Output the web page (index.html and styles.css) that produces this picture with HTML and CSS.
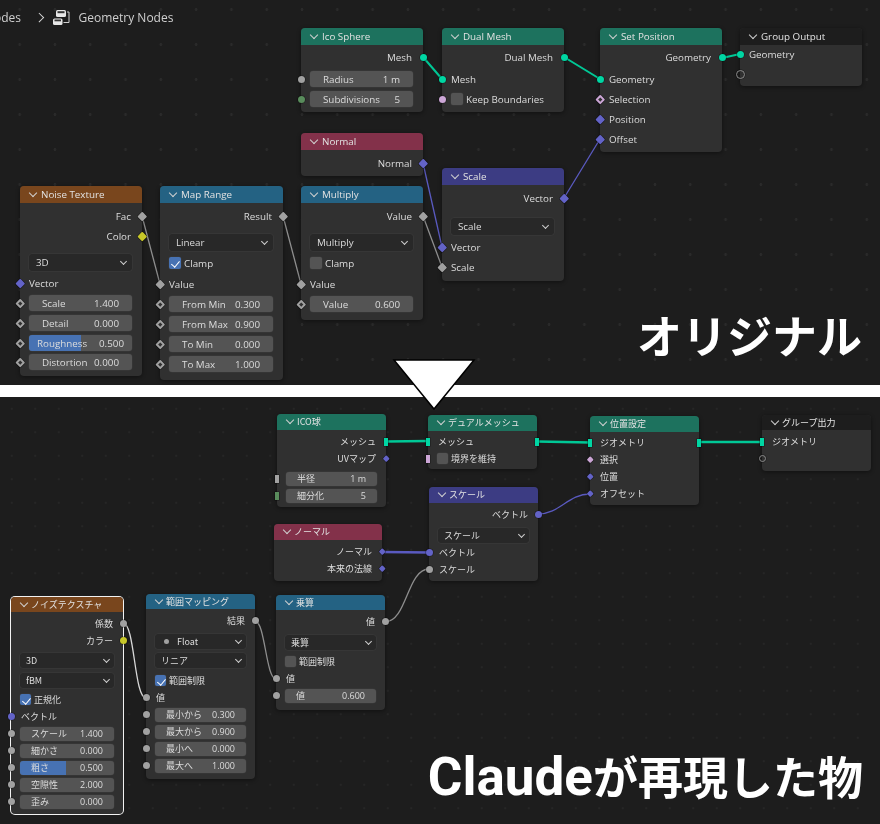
FILE: index.html
```html
<!DOCTYPE html>
<html lang="ja">
<head>
  <meta charset="UTF-8" />
  <meta name="viewport" content="width=device-width, initial-scale=1.0" />
  <title>Geometry Nodes</title>
  <link rel="stylesheet" href="styles.css">
</head>
<body>
  <div class="page">

    <!-- Original -->
    <section class="panel panel-top">
      <svg class="links" width="880" height="385" viewBox="0 0 880 385">
        <line class="link-geo" x1="423" y1="57" x2="442" y2="79" />
        <line class="link-geo" x1="564" y1="57" x2="600" y2="79" />
        <line class="link-geo" x1="722" y1="58" x2="740" y2="54" />
        <line class="link-vec" x1="564" y1="198" x2="600" y2="139" />
        <line class="link-vec" x1="423" y1="163" x2="442" y2="247" />
        <line class="link-flt" x1="423" y1="216" x2="442" y2="267" />
        <line class="link-flt" x1="142" y1="216" x2="160" y2="284" />
        <line class="link-flt" x1="283" y1="216" x2="301" y2="284" />
      </svg>

      <div class="crumbs">
        <span class="crumb-cut">Nodes</span>
        <span class="crumb-sep"></span>
        <svg class="crumb-icon" width="17" height="17" viewBox="0 0 17 17">
          <rect x="3" y="1" width="10" height="7" rx="1.5" fill="#e6e6e6" />
          <rect x="4.5" y="2.2" width="7" height="2" fill="#333" />
          <rect x="0" y="9.5" width="9.500" height="6.500" rx="1.5" fill="#e6e6e6" />
          <rect x="1.500" y="10.500" width="6.500" height="1.800" fill="#333" />
          <path d="M14 3h2v10.500h-5.500" fill="none" stroke="#d0d0d0" stroke-width="1" />
        </svg>
        <span class="crumb-name">Geometry Nodes</span>
      </div>

      <!-- Ico Sphere -->
      <div class="node n-ico">
        <div class="hdr hdr-geo">Ico Sphere</div>
        <div class="body pt2">
          <div class="row out">Mesh<i class="sock right geo"></i></div>
          <div class="row mt2"><i class="sock left flt"></i><div class="field"><span>Radius</span><span class="val">1 m</span></div></div>
          <div class="row"><i class="sock left int"></i><div class="field"><span>Subdivisions</span><span class="val">5</span></div></div>
        </div>
      </div>

      <!-- Dual Mesh -->
      <div class="node n-dual">
        <div class="hdr hdr-geo">Dual Mesh</div>
        <div class="body pt2">
          <div class="row out">Dual Mesh<i class="sock right geo"></i></div>
          <div class="row in mt2"><i class="sock left geo"></i>Mesh</div>
          <div class="row"><i class="sock left bool"></i><label class="check"><i class="box"></i>Keep Boundaries</label></div>
        </div>
      </div>

      <!-- Set Position -->
      <div class="node n-setpos">
        <div class="hdr hdr-geo">Set Position</div>
        <div class="body pt2">
          <div class="row out">Geometry<i class="sock right geo"></i></div>
          <div class="row in mt2"><i class="sock left geo"></i>Geometry</div>
          <div class="row in"><i class="sock left dia hole bool"></i>Selection</div>
          <div class="row in"><i class="sock left dia vec"></i>Position</div>
          <div class="row in"><i class="sock left dia vec"></i>Offset</div>
        </div>
      </div>

      <!-- Group Output -->
      <div class="node n-group">
        <div class="hdr hdr-group">Group Output</div>
        <div class="body">
          <div class="row in mtn1"><i class="sock left geo"></i>Geometry</div>
          <div class="row"><i class="sock left ring"></i></div>
        </div>
      </div>

      <!-- Normal -->
      <div class="node n-normal">
        <div class="hdr hdr-input">Normal</div>
        <div class="body pt3">
          <div class="row out">Normal<i class="sock right dia vec"></i></div>
        </div>
      </div>

      <!-- Noise Texture -->
      <div class="node n-noise">
        <div class="hdr hdr-tex">Noise Texture</div>
        <div class="body pt3">
          <div class="row out">Fac<i class="sock right dia flt"></i></div>
          <div class="row out">Color<i class="sock right dia col"></i></div>
          <div class="row mt6"><div class="drop">3D</div></div>
          <div class="row in mt1"><i class="sock left dia vec"></i>Vector</div>
          <div class="row"><i class="sock left dia hole flt"></i><div class="field"><span>Scale</span><span class="val">1.400</span></div></div>
          <div class="row"><i class="sock left dia hole flt"></i><div class="field"><span>Detail</span><span class="val">0.000</span></div></div>
          <div class="row"><i class="sock left dia hole flt"></i><div class="field slider"><u style="width:50%"></u><span>Roughness</span><span class="val">0.500</span></div></div>
          <div class="row mtn1"><i class="sock left dia hole flt"></i><div class="field"><span>Distortion</span><span class="val">0.000</span></div></div>
        </div>
      </div>

      <!-- Map Range -->
      <div class="node n-map">
        <div class="hdr hdr-conv">Map Range</div>
        <div class="body pt3">
          <div class="row out">Result<i class="sock right dia flt"></i></div>
          <div class="row mt6"><div class="drop">Linear</div></div>
          <div class="row mt1"><label class="check"><i class="box on"></i>Clamp</label></div>
          <div class="row in mt1"><i class="sock left dia flt"></i>Value</div>
          <div class="row"><i class="sock left dia hole flt"></i><div class="field"><span>From Min</span><span class="val">0.300</span></div></div>
          <div class="row"><i class="sock left dia hole flt"></i><div class="field"><span>From Max</span><span class="val">0.900</span></div></div>
          <div class="row"><i class="sock left dia hole flt"></i><div class="field"><span>To Min</span><span class="val">0.000</span></div></div>
          <div class="row"><i class="sock left dia hole flt"></i><div class="field"><span>To Max</span><span class="val">1.000</span></div></div>
        </div>
      </div>

      <!-- Multiply -->
      <div class="node n-mul">
        <div class="hdr hdr-conv">Multiply</div>
        <div class="body pt3">
          <div class="row out">Value<i class="sock right dia flt"></i></div>
          <div class="row mt6"><div class="drop">Multiply</div></div>
          <div class="row mt1"><label class="check"><i class="box"></i>Clamp</label></div>
          <div class="row in mt1"><i class="sock left dia flt"></i>Value</div>
          <div class="row"><i class="sock left dia hole flt"></i><div class="field"><span>Value</span><span class="val">0.600</span></div></div>
        </div>
      </div>

      <!-- Scale -->
      <div class="node n-scale">
        <div class="hdr hdr-vec">Scale</div>
        <div class="body pt3">
          <div class="row out">Vector<i class="sock right dia vec"></i></div>
          <div class="row mt8"><div class="drop">Scale</div></div>
          <div class="row in mt1"><i class="sock left dia vec"></i>Vector</div>
          <div class="row in"><i class="sock left dia flt"></i>Scale</div>
        </div>
      </div>

      <div class="caption cap-top">オリジナル</div>
    </section>

    <div class="divider"></div>

    <!-- Reproduced -->
    <section class="panel panel-bottom">
      <svg class="links" width="880" height="427" viewBox="0 0 880 427">
        <path class="link-geo thick" d="M386 44.500L428 44" />
        <path class="link-geo thick" d="M537 44.500L590 45.500" />
        <path class="link-geo thick" d="M699 45L762 45" />
        <path class="link-vec" d="M538 117C560 117 568 97 590 97" />
        <path class="link-vec thick" d="M382 155L429 155.500" />
        <path class="link-flt" d="M385 225C407 225 407 172 429 172" />
        <path class="link-flt" d="M255 224C265 224 266 282 276 282" />
        <path class="link-sel" d="M123 226C135 226 134 301 146 301" />
      </svg>

      <!-- ICO球 -->
      <div class="node n2-ico">
        <div class="hdr tall hdr-geo">ICO球</div>
        <div class="body pt3">
          <div class="row out">メッシュ<i class="sock right bar geo"></i></div>
          <div class="row out">UVマップ<i class="sock right dia vec"></i></div>
          <div class="row mt3"><i class="sock left bar flt"></i><div class="field"><span>半径</span><span class="val">1 m</span></div></div>
          <div class="row"><i class="sock left bar int"></i><div class="field"><span>細分化</span><span class="val">5</span></div></div>
        </div>
      </div>

      <!-- デュアルメッシュ -->
      <div class="node n2-dual">
        <div class="hdr tall hdr-geo">デュアルメッシュ</div>
        <div class="body pt2">
          <div class="row in"><i class="sock left bar geo"></i>メッシュ<i class="sock right bar geo"></i></div>
          <div class="row"><i class="sock left bar bool"></i><label class="check"><i class="box"></i>境界を維持</label></div>
        </div>
      </div>

      <!-- 位置設定 -->
      <div class="node n2-setpos">
        <div class="hdr tall hdr-geo">位置設定</div>
        <div class="body pt2">
          <div class="row in"><i class="sock left bar geo"></i>ジオメトリ<i class="sock right bar geo"></i></div>
          <div class="row in"><i class="sock left dia bool"></i>選択</div>
          <div class="row in"><i class="sock left dia vec"></i>位置</div>
          <div class="row in"><i class="sock left dia vec"></i>オフセット</div>
        </div>
      </div>

      <!-- グループ出力 -->
      <div class="node n2-group">
        <div class="hdr hdr-group">グループ出力</div>
        <div class="body pt3">
          <div class="row in"><i class="sock left bar geo"></i>ジオメトリ</div>
          <div class="row"><i class="sock left ring"></i></div>
        </div>
      </div>

      <!-- スケール -->
      <div class="node n2-scale">
        <div class="hdr tall hdr-vec">スケール</div>
        <div class="body pt3">
          <div class="row out">ベクトル<i class="sock right vec"></i></div>
          <div class="row mt4"><div class="drop">スケール</div></div>
          <div class="row in"><i class="sock left vec"></i>ベクトル</div>
          <div class="row in"><i class="sock left flt"></i>スケール</div>
        </div>
      </div>

      <!-- ノーマル -->
      <div class="node n2-normal">
        <div class="hdr tall hdr-input">ノーマル</div>
        <div class="body pt3">
          <div class="row out">ノーマル<i class="sock right dia vec"></i></div>
          <div class="row out">本来の法線<i class="sock right dia vec"></i></div>
        </div>
      </div>

      <!-- ノイズテクスチャ -->
      <div class="node n2-noise">
        <div class="hdr hdr-tex">ノイズテクスチャ</div>
        <div class="body pt3">
          <div class="row out">係数<i class="sock right flt"></i></div>
          <div class="row out">カラー<i class="sock right col"></i></div>
          <div class="row mt3"><div class="drop">3D</div></div>
          <div class="row mt3"><div class="drop">fBM</div></div>
          <div class="row mt2"><label class="check"><i class="box on"></i>正規化</label></div>
          <div class="row in"><i class="sock left vec"></i>ベクトル</div>
          <div class="row"><i class="sock left flt"></i><div class="field"><span>スケール</span><span class="val">1.400</span></div></div>
          <div class="row"><i class="sock left flt"></i><div class="field"><span>細かさ</span><span class="val">0.000</span></div></div>
          <div class="row"><i class="sock left flt"></i><div class="field slider"><u style="width:49%"></u><span>粗さ</span><span class="val">0.500</span></div></div>
          <div class="row"><i class="sock left flt"></i><div class="field"><span>空隙性</span><span class="val">2.000</span></div></div>
          <div class="row"><i class="sock left flt"></i><div class="field"><span>歪み</span><span class="val">0.000</span></div></div>
        </div>
      </div>

      <!-- 範囲マッピング -->
      <div class="node n2-map">
        <div class="hdr hdr-conv">範囲マッピング</div>
        <div class="body pt3">
          <div class="row out">結果<i class="sock right flt"></i></div>
          <div class="row mt4"><div class="drop"><i class="dot"></i>Float</div></div>
          <div class="row mt2"><div class="drop">リニア</div></div>
          <div class="row mt3"><label class="check"><i class="box on"></i>範囲制限</label></div>
          <div class="row in"><i class="sock left flt"></i>値</div>
          <div class="row"><i class="sock left flt"></i><div class="field"><span>最小から</span><span class="val">0.300</span></div></div>
          <div class="row"><i class="sock left flt"></i><div class="field"><span>最大から</span><span class="val">0.900</span></div></div>
          <div class="row"><i class="sock left flt"></i><div class="field"><span>最小へ</span><span class="val">0.000</span></div></div>
          <div class="row"><i class="sock left flt"></i><div class="field"><span>最大へ</span><span class="val">1.000</span></div></div>
        </div>
      </div>

      <!-- 乗算 -->
      <div class="node n2-mul">
        <div class="hdr hdr-conv">乗算</div>
        <div class="body pt3">
          <div class="row out">値<i class="sock right flt"></i></div>
          <div class="row mt4"><div class="drop">乗算</div></div>
          <div class="row mt2"><label class="check"><i class="box"></i>範囲制限</label></div>
          <div class="row in"><i class="sock left flt"></i>値</div>
          <div class="row"><i class="sock left flt"></i><div class="field"><span>値</span><span class="val">0.600</span></div></div>
        </div>
      </div>

      <div class="caption cap-bottom"><span class="latin">Claude</span>が再現した物</div>
    </section>

    <svg class="arrow" width="84" height="54" viewBox="0 0 84 54">
      <polygon points="2,2 82,2 42,51" fill="#fff" stroke="#000" stroke-width="1.500" />
    </svg>
  </div>
</body>
</html>
```

FILE: styles.css
```css
* { box-sizing: border-box; }
body { margin: 0; background: #1d1d1d; font-family: "Open Sans", "Noto Sans CJK JP", sans-serif; color: #dcdcdc; }
.page { position: relative; width: 880px; height: 824px; overflow: hidden; filter: blur(.3px); }

.panel { position: relative; background-color: #1d1d1d; }
.panel-top { height: 385px; font-size: 9.800px; background-image: radial-gradient(circle, #2a2a2a 1.2px, transparent 1.6px); background-size: 35.300px 35px; background-position: 2px 27px; }
.panel-bottom { height: 427px; font-family: "Noto Sans CJK JP", sans-serif; font-size: 9px; background-image: radial-gradient(circle, #262626 .8px, transparent 1.2px); background-size: 23.500px 23.500px; background-position: 0 0; }
.divider { height: 12px; background: #fff; }
.arrow { position: absolute; left: 392px; top: 358px; }

.links { position: absolute; left: 0; top: 0; }
.links line, .links path { fill: none; stroke-linecap: round; }
.link-geo { stroke: #00c896; stroke-width: 2; }
.link-vec { stroke: #5a5ac0; stroke-width: 1.300; }
.link-flt { stroke: #8e8e8e; stroke-width: 1.300; }
.link-sel { stroke: #d8d8d8; stroke-width: 1.300; }
.links .thick { stroke-width: 2.400; }

.crumbs { position: absolute; left: -15px; top: 8px; height: 18px; display: flex; align-items: center; font-size: 12px; color: #cfcfcf; }
.crumb-cut { width: 33px; }
.crumb-sep { width: 6.500px; height: 6.500px; margin-left: 18px; border-top: 1px solid #d8d8d8; border-right: 1px solid #d8d8d8; transform: rotate(45deg); }
.crumb-icon { margin-left: 10px; }
.crumb-name { margin-left: 9px; }

/* nodes */
.node { position: absolute; background: #303030; border-radius: 4px; box-shadow: 0 1px 4px rgba(0,0,0,.45); }
.hdr { position: relative; height: 17px; padding-left: 21px; line-height: 17px; border-radius: 4px 4px 0 0; color: #e2e2e2; }
.hdr::before { content: ""; position: absolute; left: 10px; top: 4px; width: 5px; height: 5px; border-right: 1px solid #d0d0d0; border-bottom: 1px solid #d0d0d0; transform: rotate(45deg); }
.hdr-geo { background: #1d725e; }
.hdr-input { background: #83314a; }
.hdr-tex { background: #79461d; }
.hdr-conv { background: #246283; }
.hdr-vec { background: #3c3c83; }
.hdr-group { background: #1d1d1d; }

.body.pt2 { padding-top: 2px; }
.body.pt3 { padding-top: 3px; }
.mt1 { margin-top: 1px; }
.mt2 { margin-top: 2px; }
.mt3 { margin-top: 3px; }
.mt4 { margin-top: 4px; }
.mt6 { margin-top: 6px; }
.mt8 { margin-top: 8px; }
.mtn1 { margin-top: -1px; }

.row { position: relative; height: 20px; display: flex; align-items: center; }
.row.in { padding-left: 9px; }
.row.out { justify-content: flex-end; padding-right: 11px; }

/* sockets */
.sock { position: absolute; top: 50%; width: 7px; height: 7px; margin-top: -3.500px; border-radius: 50%; background: #a1a1a1; box-shadow: 0 0 0 .5px rgba(0,0,0,.5); }
.sock.left { left: -3.500px; }
.sock.right { right: -3.500px; }
.sock.dia { border-radius: 1px; transform: rotate(45deg); width: 6.500px; height: 6.500px; }
.sock.hole::after { content: ""; position: absolute; left: 2px; top: 2px; width: 2.500px; height: 2.500px; background: #303030; }
.sock.bar { width: 4px; height: 9px; margin-top: -4.500px; border-radius: 0; }
.sock.left.bar { left: -2px; }
.sock.right.bar { right: -2px; }
.sock.ring { width: 9px; height: 9px; margin-top: -4.500px; left: -4.500px; background: transparent; border: 1px solid #8a8a8a; }
.geo { background: #00d6a3 !important; }
.flt { background: #a1a1a1; }
.int { background: #598c5c; }
.bool { background: #cca6d6; }
.vec { background: #6363c7; }
.col { background: #c7c729; }

/* widgets */
.field { position: relative; flex: 1; height: 16px; margin: 0 10px 0 9px; padding: 0 13px; display: flex; justify-content: space-between; align-items: center; background: #545454; border-radius: 3px; box-shadow: 0 0 0 .5px #3a3a3a; color: #dcdcdc; overflow: hidden; white-space: nowrap; }
.field span { position: relative; }
.field.slider { padding: 0 8px; }
.field u { position: absolute; left: 0; top: 0; bottom: 0; background: #4772b3; }
.val { font-family: "Open Sans", sans-serif; }
.drop { position: relative; flex: 1; height: 17px; margin: 0 10px 0 9px; padding-left: 7px; display: flex; align-items: center; background: #282828; border-radius: 3px; box-shadow: 0 0 0 .5px #3d3d3d; }
.drop::after { content: ""; position: absolute; right: 6px; top: 5px; width: 4px; height: 4px; border-right: 1px solid #cfcfcf; border-bottom: 1px solid #cfcfcf; transform: rotate(45deg); }
.dot { width: 5px; height: 5px; margin: 0 8px 0 3px; border-radius: 50%; background: #a1a1a1; }
.check { margin-left: 9px; display: flex; align-items: center; gap: 3px; }
.box { position: relative; width: 12px; height: 12px; background: #545454; border-radius: 2px; box-shadow: 0 0 0 .5px #3a3a3a; }
.box.on { background: #4772b3; }
.box.on::after { content: ""; position: absolute; left: 4px; top: 1.500px; width: 3.500px; height: 7px; border-right: 1.500px solid #fff; border-bottom: 1.500px solid #fff; transform: rotate(40deg); }

/* bottom panel sizes */
.panel-bottom .hdr { height: 15px; line-height: 15px; padding-left: 20px; }
.panel-bottom .hdr.tall { height: 16px; }
.panel-bottom .hdr::before { top: 3px; }
.panel-bottom .row { height: 17px; }
.panel-bottom .row.in { padding-left: 10px; }
.panel-bottom .row.out { padding-right: 10px; }
.panel-bottom .sock.bar { width: 4px; height: 8px; margin-top: -4px; }
.panel-bottom .sock.left.bar { left: -2px; }
.panel-bottom .sock.right.bar { right: -2px; }
.panel-bottom .sock.dia { width: 4.500px; height: 4.500px; margin-top: -2.250px; }
.panel-bottom .sock.left.dia { left: -2.250px; }
.panel-bottom .sock.right.dia { right: -2.250px; }
.panel-bottom .field { height: 14px; margin: 0 9px; padding: 0 11px; }
.panel-bottom .drop { height: 15px; margin: 0 9px; padding-left: 6px; }
.panel-bottom .drop::after { right: 5px; top: 4px; }
.panel-bottom .box { width: 11px; height: 11px; }
.panel-bottom .sock.ring { width: 7px; height: 7px; margin-top: -3.500px; left: -3.500px; }

/* node places, top panel */
.n-ico { left: 301px; top: 28px; width: 122px; height: 84px; }
.n-dual { left: 442px; top: 28px; width: 122px; height: 84px; }
.n-setpos { left: 600px; top: 28px; width: 122px; height: 124px; }
.n-group { left: 740px; top: 28px; width: 122px; height: 58px; }
.n-normal { left: 301px; top: 133px; width: 122px; height: 43px; }
.n-noise { left: 20px; top: 186px; width: 122px; height: 190px; }
.n-map { left: 160px; top: 186px; width: 123px; height: 194px; }
.n-mul { left: 301px; top: 186px; width: 122px; height: 134px; }
.n-scale { left: 442px; top: 168px; width: 122px; height: 113px; }

/* node places, bottom panel */
.n2-ico { left: 277px; top: 17px; width: 109px; height: 93px; }
.n2-dual { left: 428px; top: 18px; width: 109px; height: 54px; }
.n2-setpos { left: 590px; top: 19px; width: 109px; height: 89px; }
.n2-group { left: 762px; top: 18px; width: 109px; height: 56px; }
.n2-scale { left: 429px; top: 90px; width: 109px; height: 94px; }
.n2-normal { left: 274px; top: 127px; width: 108px; height: 57px; }
.n2-noise { left: 11px; top: 200px; width: 112px; height: 217px; box-shadow: 0 0 0 1px #f2f2f2; }
.n2-map { left: 146px; top: 197px; width: 109px; height: 185px; }
.n2-mul { left: 276px; top: 198px; width: 109px; height: 115px; }

.caption { position: absolute; font-family: "Noto Sans CJK JP", sans-serif; font-weight: 700; color: #fff; font-size: 45px; line-height: 1; white-space: nowrap; }
.cap-top { right: 18px; top: 312px; }
.cap-bottom { right: 17px; top: 354px; }
.latin { font-family: Roboto, sans-serif; font-size: 53px; }
```
